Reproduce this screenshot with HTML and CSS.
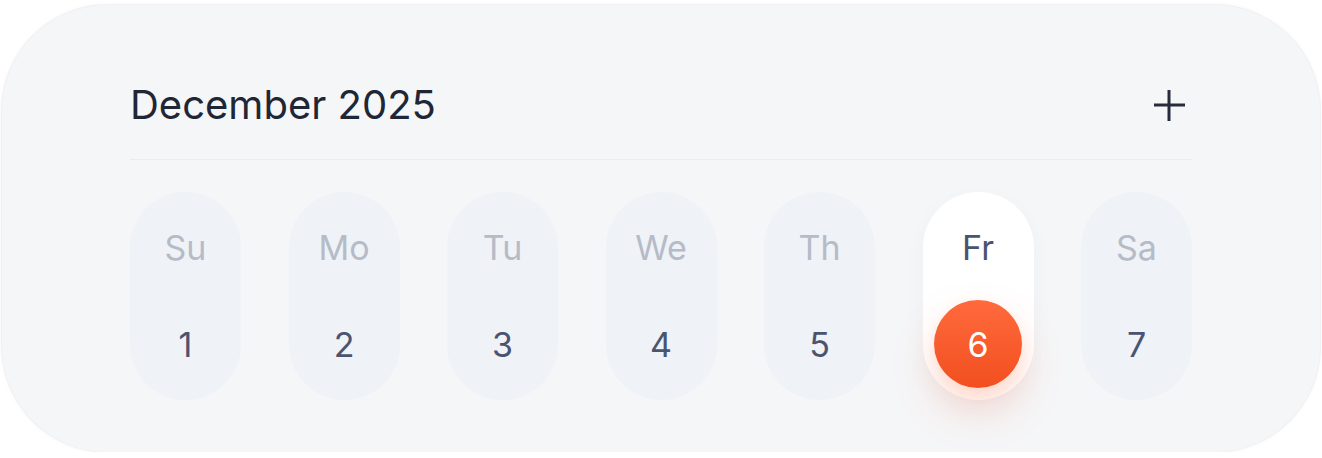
FILE: index.html
```html
<!DOCTYPE html>
<html lang="en">
<head>
<meta charset="utf-8">
<title>Calendar</title>
<link rel="stylesheet" href="styles.css">
</head>
<body>
<div class="card">
  <div class="header">
    <h1 class="title">December 2025</h1>
    <button class="add" aria-label="Add">
      <svg width="32" height="32" viewBox="0 0 32 32"><path d="M16 1v31M1 16h31" stroke="#262c3b" stroke-width="3" fill="none"/></svg>
    </button>
  </div>
  <div class="week">
    <div class="day"><span class="name">Su</span><span class="num">1</span></div>
    <div class="day"><span class="name">Mo</span><span class="num">2</span></div>
    <div class="day"><span class="name">Tu</span><span class="num">3</span></div>
    <div class="day"><span class="name">We</span><span class="num">4</span></div>
    <div class="day"><span class="name">Th</span><span class="num">5</span></div>
    <div class="day active"><span class="name">Fr</span><span class="num">6</span></div>
    <div class="day"><span class="name">Sa</span><span class="num">7</span></div>
  </div>
</div>
</body>
</html>
```
FILE: styles.css
```css
* { box-sizing: border-box; }
html, body { margin: 0; padding: 0; background: #ffffff; }
body { font-family: Inter, "Noto Sans", sans-serif; }
.card {
  margin: 5px 2px 0 2px;
  height: 447px;
  border-radius: 106px;
  background: #f5f6f8;
  box-shadow: 0 0 0 1px #f0f0f3, 0 0 5px rgba(60, 40, 60, 0.05);
  padding: 76px 128px 0 128px;
}
.header {
  display: flex;
  align-items: center;
  justify-content: space-between;
  height: 79px;
  padding-bottom: 31px;
  border-bottom: 1px solid #eaecf0;
}
.title {
  margin: 0;
  font-size: 40px;
  line-height: 48px;
  font-weight: 400;
  color: #1f2636;
}
.add {
  border: 0;
  background: none;
  padding: 0;
  margin-right: 7px;
  width: 32px;
  height: 32px;
  display: flex;
}
.week {
  display: flex;
  justify-content: space-between;
  margin-top: 32px;
}
.day {
  width: 111px;
  height: 208px;
  border-radius: 56px;
  background: #eff2f6;
  display: flex;
  flex-direction: column;
  align-items: center;
  justify-content: space-between;
  padding: 11px 0 12px;
}
.name, .num {
  width: 88px;
  height: 88px;
  display: flex;
  align-items: center;
  justify-content: center;
  font-size: 34px;
}
.name { color: #b6bbc8; }
.num { color: #4a5470; }
.day.active {
  background: #ffffff;
  box-shadow: 0 8px 24px rgba(30, 40, 70, 0.03);
}
.day.active .name { color: #4a5470; }
.day.active .num {
  border-radius: 50%;
  color: #ffffff;
  background: linear-gradient(180deg, #ff6a3d 0%, #f24f1f 100%);
  box-shadow: 0 22px 46px rgba(250, 95, 45, 0.2), 0 6px 14px rgba(245, 85, 35, 0.1);
}
```
